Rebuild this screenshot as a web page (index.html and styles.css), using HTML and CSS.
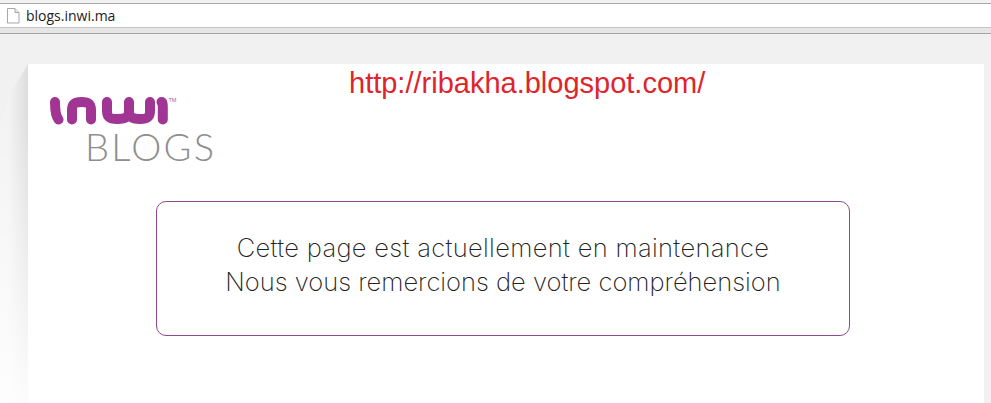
FILE: index.html
```html
<!DOCTYPE html>
<html lang="fr">
<head>
<meta charset="utf-8">
<title>blogs.inwi.ma</title>
<link rel="stylesheet" href="styles.css">
</head>
<body>
<header class="chrome">
  <div class="address">
    <svg class="page-icon" width="13" height="17" viewBox="0 0 13 17"><path d="M.5 1.500h7.500l4 4v10.500h-11.500z" fill="#fff" stroke="#a8a8a8"/><path d="M8 1.500v4h4" fill="#e8e8e8" stroke="#a8a8a8"/></svg>
    <span class="url">blogs.inwi.ma</span>
  </div>
  <div class="band"></div>
</header>
<main class="stage">
  <section class="panel">
    <a class="watermark">http://ribakha.blogspot.com/</a>
    <div class="brand">
      <svg class="logo" width="130" height="30" viewBox="0 0 130 30"><g fill="none" stroke="#a03593" stroke-width="10" stroke-linecap="round" stroke-linejoin="round"><path d="M6 6C6 14 6.500 20 9.500 23.500"/><path d="M23 23.500V14C23 8 25.500 6 32.500 6C40 6 42 8 42 14V23.500"/><path d="M58 6V15C58 21 60 23 68 23C77 23 80 21 80 15V6M80 15C80 21 83 23 91 23C99 23 101 21 101 15V6"/><path d="M112.500 6C113.500 6 113.800 8 113.800 12V23.500"/></g><text class="tm" x="119.500" y="6">TM</text></svg>
      <div class="blogs">BLOGS</div>
    </div>
    <div class="notice">
      <p class="notice-lead">Cette page est actuellement en maintenance</p>
      <p>Nous vous remercions de votre compréhension</p>
    </div>
  </section>
</main>
</body>
</html>
```
FILE: styles.css
```css
* { box-sizing: border-box; }
html, body { margin: 0; height: 403px; overflow: hidden; }
body { background: #f1f1f1; font-family: "Liberation Sans", Arial, sans-serif; }
.chrome { height: 34px; padding-top: 3px; background: #f1f1f1; }
.address {
  height: 25px;
  display: flex;
  align-items: center;
  gap: 6px;
  padding-left: 7px;
  background: #fff;
  border-top: 1px solid #a9a9a9;
  border-bottom: 1px solid #c4c4c4;
}
.page-icon { flex: none; }
.url { font-family: "Open Sans", sans-serif; font-size: 14px; color: #222; }
.band { height: 6px; background: #e6e6e6; border-bottom: 1px solid #a3a3a3; }
.stage { padding: 30px 7px 0 28px; }
.panel { position: relative; height: 339px; padding: 32px 0 0 21px; background: #fff; }
.panel::before {
  content: "";
  position: absolute;
  left: -28px;
  top: 0;
  width: 28px;
  height: 339px;
  background:
    linear-gradient(to bottom, rgba(255, 255, 255, 0) 15%, rgba(255, 255, 255, .9) 100%),
    linear-gradient(to right, #f3f3f3 30%, #dedede);
  clip-path: polygon(100% 0, 100% 100%, 0 100%, 0 60px, 36% 30px);
}
.watermark {
  position: absolute;
  left: 321px;
  top: 3px;
  font-size: 29px;
  line-height: 32px;
  color: #e0242c;
}
.brand { height: 105px; }
.logo { display: block; }
.tm { font-family: "Liberation Sans", sans-serif; font-size: 5.500px; fill: #a85a9e; }
.blogs {
  margin: 2px 0 0 36px;
  font-family: Lato, sans-serif;
  font-weight: 300;
  font-size: 38px;
  letter-spacing: 2.300px;
  line-height: 36px;
  color: #8e8e8e;
}
.notice {
  width: 694px;
  height: 135px;
  margin-left: 107px;
  padding-top: 29px;
  border: 1px solid #8d4a8f;
  border-radius: 10px;
  text-align: center;
  font-family: Inter, sans-serif;
  font-weight: 200;
  font-size: 25.500px;
  line-height: 34px;
  color: #222;
}
.notice p { margin: 0; }
.notice .notice-lead { letter-spacing: .33px; }
```
